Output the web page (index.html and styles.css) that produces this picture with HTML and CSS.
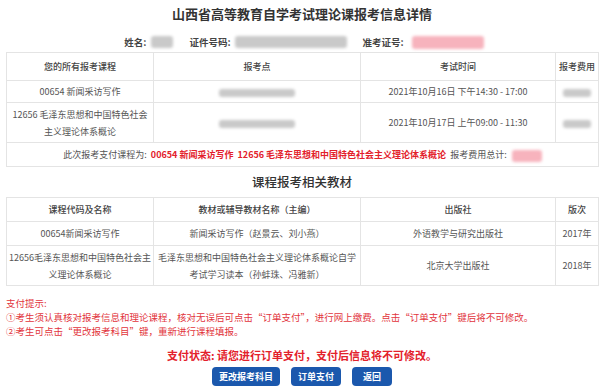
FILE: index.html
```html
<!DOCTYPE html>
<html>
<head>
    <meta charset="utf-8">
    <title>山西省高等教育自学考试理论课报考信息详情</title>
    <link rel="stylesheet" href="styles.css">
</head>
<body>
    <h1 class="title">山西省高等教育自学考试理论课报考信息详情</h1>
    <div class="info">
        <span class="label">姓名:</span>
        <span class="blur name"></span>
        <span class="label gapped">证件号码:</span>
        <span class="blur idno"></span>
        <span class="label gapped">准考证号:</span>
        <span class="blur pink ticket"></span>
    </div>

    <table class="grid exams">
        <colgroup>
            <col class="c1"><col class="c2"><col class="c3"><col class="c4">
        </colgroup>
        <thead>
            <tr>
                <th>您的所有报考课程</th>
                <th>报考点</th>
                <th>考试时间</th>
                <th>报考费用</th>
            </tr>
        </thead>
        <tbody>
            <tr>
                <td>00654 新闻采访写作</td>
                <td><span class="blur place"></span></td>
                <td>2021年10月16日 下午14:30 - 17:00</td>
                <td><span class="blur fee"></span></td>
            </tr>
            <tr class="tall">
                <td>12656 毛泽东思想和中国特色社会<br>主义理论体系概论</td>
                <td><span class="blur place"></span></td>
                <td>2021年10月17日 上午09:00 - 11:30</td>
                <td><span class="blur fee"></span></td>
            </tr>
            <tr class="summary">
                <td colspan="4">
                    此次报考支付课程为:
                    <span class="red">00654 新闻采访写作&nbsp;&nbsp;12656 毛泽东思想和中国特色社会主义理论体系概论</span>
                    报考费用总计:
                    <span class="blur pink total"></span>
                </td>
            </tr>
        </tbody>
    </table>

    <h2 class="subtitle">课程报考相关教材</h2>

    <table class="grid books">
        <colgroup>
            <col class="c1"><col class="c2"><col class="c3"><col class="c4">
        </colgroup>
        <thead>
            <tr>
                <th>课程代码及名称</th>
                <th>教材或辅导教材名称（主编）</th>
                <th>出版社</th>
                <th>版次</th>
            </tr>
        </thead>
        <tbody>
            <tr>
                <td>00654新闻采访写作</td>
                <td>新闻采访写作（赵景云、刘小燕）</td>
                <td>外语教学与研究出版社</td>
                <td>2017年</td>
            </tr>
            <tr class="tall">
                <td>12656毛泽东思想和中国特色社会主义理论体系概论</td>
                <td>毛泽东思想和中国特色社会主义理论体系概论自学考试学习读本（孙蚌珠、冯雅新）</td>
                <td>北京大学出版社</td>
                <td>2018年</td>
            </tr>
        </tbody>
    </table>

    <div class="tips">
        <p>支付提示:</p>
        <p>①考生须认真核对报考信息和理论课程，核对无误后可点击“订单支付”，进行网上缴费。点击“订单支付”键后将不可修改。</p>
        <p>②考生可点击“更改报考科目”键，重新进行课程填报。</p>
    </div>

    <div class="status">支付状态: 请您进行订单支付，支付后信息将不可修改。</div>

    <div class="actions">
        <div class="button">更改报考科目</div>
        <div class="button">订单支付</div>
        <div class="button">返回</div>
    </div>
</body>
</html>
```

FILE: styles.css
```css
body {
    margin: 0;
    background-color: #fff;
    color: #555;
    font-family: "Noto Sans CJK SC", "Noto Sans", sans-serif;
    font-size: 9px;
}

.title {
    margin: 0;
    padding-top: 5px;
    font-size: 13px;
    line-height: 18px;
    font-weight: bold;
    color: #333;
    text-align: center;
}

.info {
    display: flex;
    justify-content: center;
    align-items: center;
    margin-top: 11px;
    height: 16px;
    padding-left: 4px;
    font-size: 9.5px;
    font-weight: bold;
    color: #444;
}

.label.gapped {
    margin-left: 16px;
}

.blur {
    display: inline-block;
    background-color: #c9c9c9;
    border-radius: 3px;
    filter: blur(1.5px);
    vertical-align: middle;
}

.blur.pink {
    background-color: #f7b3bd;
}

.name {
    width: 22px;
    height: 12px;
    margin-left: 5px;
}

.idno {
    width: 112px;
    height: 12px;
    margin-left: 4px;
}

.ticket {
    width: 72px;
    height: 13px;
    margin-left: 8px;
}

.grid {
    width: 592px;
    margin: 2px 6px 0 6px;
    border-collapse: collapse;
    table-layout: fixed;
    font-size: 9px;
}

.grid th,
.grid td {
    border: 1px solid #e4e4e4;
    padding: 2px 2px;
    text-align: center;
    line-height: 17px;
    font-weight: normal;
}

.grid th {
    color: #444;
    font-weight: 500;
}

.c1 { width: 147px; }
.c2 { width: 207px; }
.c3 { width: 195px; }
.c4 { width: 43px; }

.exams th {
    height: 23px;
}

.exams td {
    height: 17px;
}

.books th,
.books td {
    height: 19px;
}

.grid .tall td {
    height: 35px;
}

.place {
    width: 76px;
    height: 8px;
}

.fee {
    width: 28px;
    height: 8px;
}

.summary td {
    height: 19px;
}

.red {
    color: #e3212b;
    font-weight: bold;
    margin: 0 2px;
}

.total {
    width: 30px;
    height: 12px;
    margin-left: 3px;
}

.subtitle {
    margin: 0;
    padding-top: 2px;
    font-size: 12.5px;
    line-height: 26px;
    font-weight: 500;
    color: #333;
    text-align: center;
}

.tips {
    margin-top: 10px;
    padding-left: 6px;
    color: #e2343c;
    font-size: 9.5px;
}

.tips p {
    margin: 0;
    line-height: 14px;
}

.status {
    margin-top: 9px;
    text-align: center;
    color: #e3212b;
    font-size: 11px;
    font-weight: bold;
    line-height: 16px;
}

.actions {
    display: flex;
    justify-content: center;
    gap: 11px;
    margin-top: 4px;
}

.button {
    min-width: 40px;
    height: 19px;
    line-height: 19px;
    padding: 0 7px;
    box-sizing: border-box;
    border-radius: 4px;
    background-color: #1b58ad;
    color: #fff;
    font-size: 9px;
    font-weight: bold;
    text-align: center;
}
```
